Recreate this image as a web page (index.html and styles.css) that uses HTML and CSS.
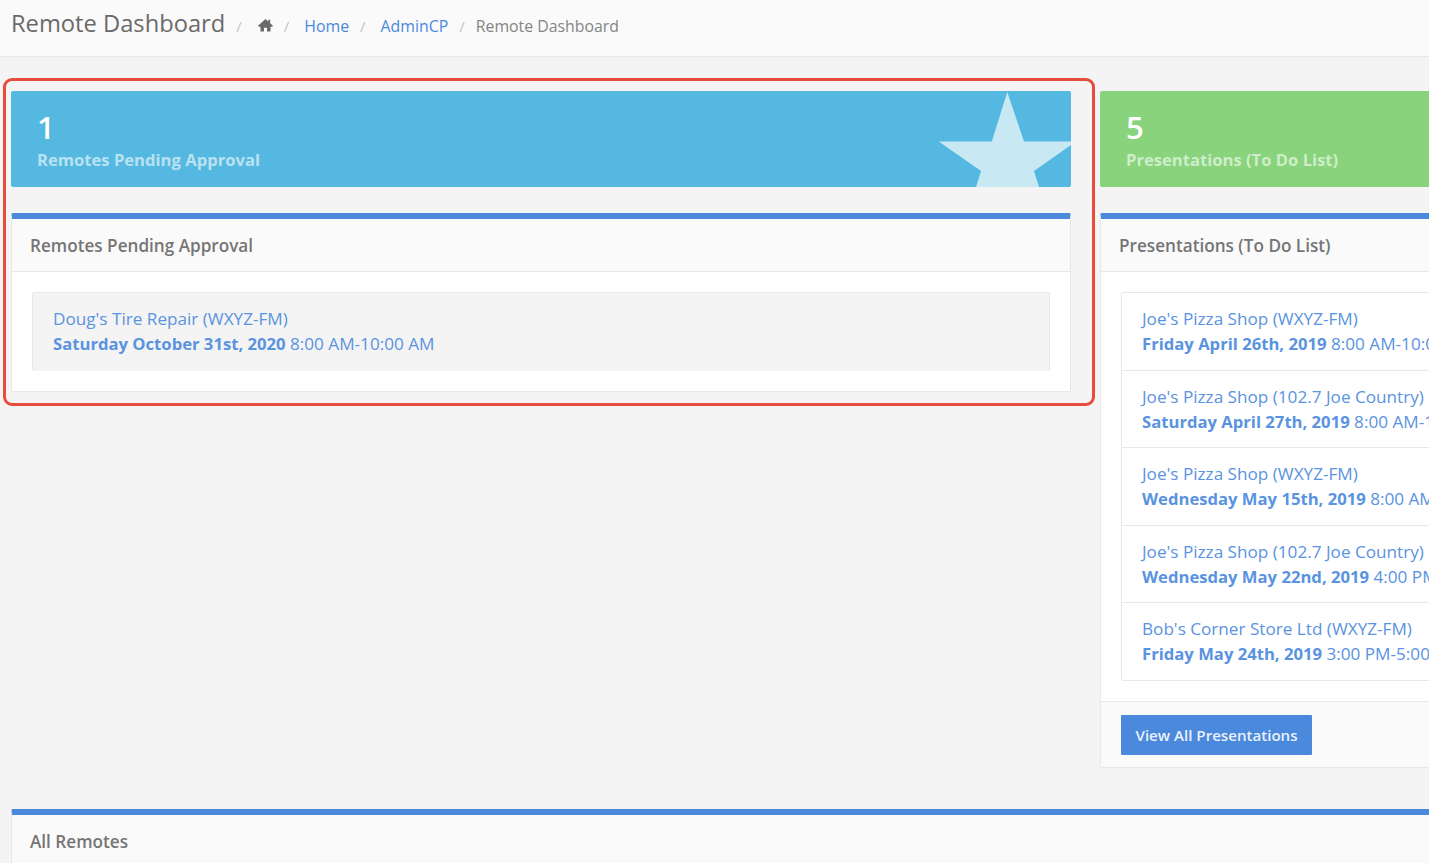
FILE: index.html
```html
<!DOCTYPE html>
<html lang="en">
<head>
<meta charset="utf-8">
<title>Remote Dashboard</title>
<link rel="stylesheet" href="styles.css">
</head>
<body>
<div class="page">
  <header class="topbar">
    <h1 class="title">Remote Dashboard</h1>
    <nav class="crumbs">
      <span class="sep first">/</span>
      <svg class="home" viewBox="0 0 16 14" aria-hidden="true"><path d="M8 0.5 L11 3.2 V1.5 H13 V5 L16 7.8 L15 8.8 H13.4 V14 H9.6 V10 H6.4 V14 H2.6 V8.8 H1 L0 7.8 Z"/></svg>
      <span class="sep">/</span>
      <a class="crumb-link">Home</a>
      <span class="sep">/</span>
      <a class="crumb-link">AdminCP</a>
      <span class="sep last">/</span>
      <span class="crumb-current">Remote Dashboard</span>
    </nav>
  </header>

  <main class="content">
    <div class="columns">
      <section class="column">
        <div class="stat stat-blue">
          <div class="stat-num">1</div>
          <div class="stat-label">Remotes Pending Approval</div>
          <svg class="stat-star" viewBox="0 0 134 96" aria-hidden="true"><path d="M70.3 1 L87 50.5 L139 50.5 L97 80 L102 96 L39 96 L44 80 L1.8 50.5 L54.8 50.5 Z"/></svg>
        </div>
        <div class="panel">
          <div class="panel-head">Remotes Pending Approval</div>
          <div class="panel-body">
            <div class="item item-grey">
              <a class="item-name">Doug's Tire Repair (WXYZ-FM)</a>
              <a class="item-when"><b>Saturday October 31st, 2020</b> 8:00 AM-10:00 AM</a>
            </div>
          </div>
        </div>
      </section>

      <section class="column">
        <div class="stat stat-green">
          <div class="stat-num">5</div>
          <div class="stat-label">Presentations (To Do List)</div>
        </div>
        <div class="panel">
          <div class="panel-head">Presentations (To Do List)</div>
          <div class="panel-body">
            <div class="list">
              <div class="item">
                <a class="item-name">Joe's Pizza Shop (WXYZ-FM)</a>
                <a class="item-when"><b>Friday April 26th, 2019</b> 8:00 AM-10:00 AM</a>
              </div>
              <div class="item">
                <a class="item-name">Joe's Pizza Shop (102.7 Joe Country)</a>
                <a class="item-when"><b>Saturday April 27th, 2019</b> 8:00 AM-10:00 AM</a>
              </div>
              <div class="item">
                <a class="item-name">Joe's Pizza Shop (WXYZ-FM)</a>
                <a class="item-when"><b>Wednesday May 15th, 2019</b> 8:00 AM-10:00 AM</a>
              </div>
              <div class="item">
                <a class="item-name">Joe's Pizza Shop (102.7 Joe Country)</a>
                <a class="item-when"><b>Wednesday May 22nd, 2019</b> 4:00 PM-6:00 PM</a>
              </div>
              <div class="item">
                <a class="item-name">Bob's Corner Store Ltd (WXYZ-FM)</a>
                <a class="item-when"><b>Friday May 24th, 2019</b> 3:00 PM-5:00 PM</a>
              </div>
            </div>
          </div>
          <div class="panel-foot"><a class="btn">View All Presentations</a></div>
        </div>
      </section>
    </div>

    <div class="panel panel-wide">
      <div class="panel-head">All Remotes</div>
    </div>
  </main>

  <div class="callout"></div>
</div>
</body>
</html>
```

FILE: styles.css
```css
* { box-sizing: border-box; }
html, body { margin: 0; padding: 0; height: 100%; overflow: hidden; }
body {
  font-family: "Open Sans", "Liberation Sans", sans-serif;
  background: #f4f4f4;
  color: #6b6b6b;
}
.page { position: relative; width: 1429px; height: 863px; overflow: hidden; }

.topbar {
  display: flex;
  align-items: center;
  height: 57px;
  padding: 0 0 9px 11px;
  background: #fafafa;
  border-bottom: 1px solid #e8e8e8;
}
.title { margin: 0; font-size: 23.7px; font-weight: 400; color: #6a6a6a; line-height: 1; }
.crumbs { display: flex; align-items: center; font-size: 15.85px; margin-top: 5px; }
.sep { color: #c4c4c4; margin: 0 15px 0 11px; font-size: 15px; }
.sep.first { margin: 0 15px 0 11px; }
.sep.last { margin-right: 11px; }
.home { width: 15px; height: 14px; fill: #6a6a6a; margin-top: -2px; margin-left: 1px; }
.crumb-link { color: #4a89dc; }
.crumb-current { color: #858585; }

.content { padding: 34px 0 0 11px; width: 2200px; }
.columns { display: grid; grid-template-columns: 1060px 1060px; column-gap: 29px; align-items: start; }

.stat { position: relative; height: 96px; padding: 18px 26px 0; border-radius: 2px; overflow: hidden; color: #fff; }
.stat-blue { background: #54b8e0; }
.stat-green { background: #88d37c; }
.stat-num { font-size: 31px; font-weight: 600; line-height: 36px; }
.stat-label { margin-top: 4px; font-size: 16.6px; font-weight: 700; line-height: 22px; color: rgba(255,255,255,.6); }
.stat-star { position: absolute; right: 0; top: 0; width: 134px; height: 96px; fill: #c8e8f4; }

.panel {
  margin-top: 26px;
  background: #fff;
  border: 1px solid #e8e8e8;
  border-top: 6px solid #4a89dc;
  border-radius: 2px;
}
.panel-wide { margin-top: 41px; width: 2120px; background: #fafafa; }
.panel-head {
  height: 53px;
  padding: 0 18px;
  display: flex;
  align-items: center;
  font-size: 17.15px;
  font-weight: 600;
  color: #757575;
  background: #fafafa;
  border-bottom: 1px solid #e8e8e8;
}
.panel-wide .panel-head { border-bottom: 0; }
.panel-body { padding: 20px; }
.list { border: 1px solid #e8e8e8; border-radius: 2px; }
.item { display: flex; flex-direction: column; padding: 13px 20px 13.5px; font-size: 17.15px; line-height: 25px; color: #5a93df; white-space: nowrap; border-bottom: 1px solid #e8e8e8; }
.item:last-child { border-bottom: 0; }
.item-grey { background: #f4f4f4; border: 1px solid #e8e8e8; border-radius: 2px; padding: 13px 20px 15px; }
.item-when b { font-size: 16.65px; font-weight: 700; }

.panel-foot { padding: 13px 20px; height: 66px; background: #fafafa; border-top: 1px solid #e8e8e8; }
.btn {
  display: inline-flex;
  align-items: center;
  height: 40px;
  padding: 0 14.5px;
  background: #4a89dc;
  color: #eaf1fb;
  font-size: 15.1px;
  font-weight: 600;
  border-radius: 1px;
}

.callout {
  position: absolute;
  left: 3px;
  top: 78px;
  width: 1092px;
  height: 328px;
  border: 3px solid #e74c3c;
  border-radius: 9px;
  pointer-events: none;
}
```
